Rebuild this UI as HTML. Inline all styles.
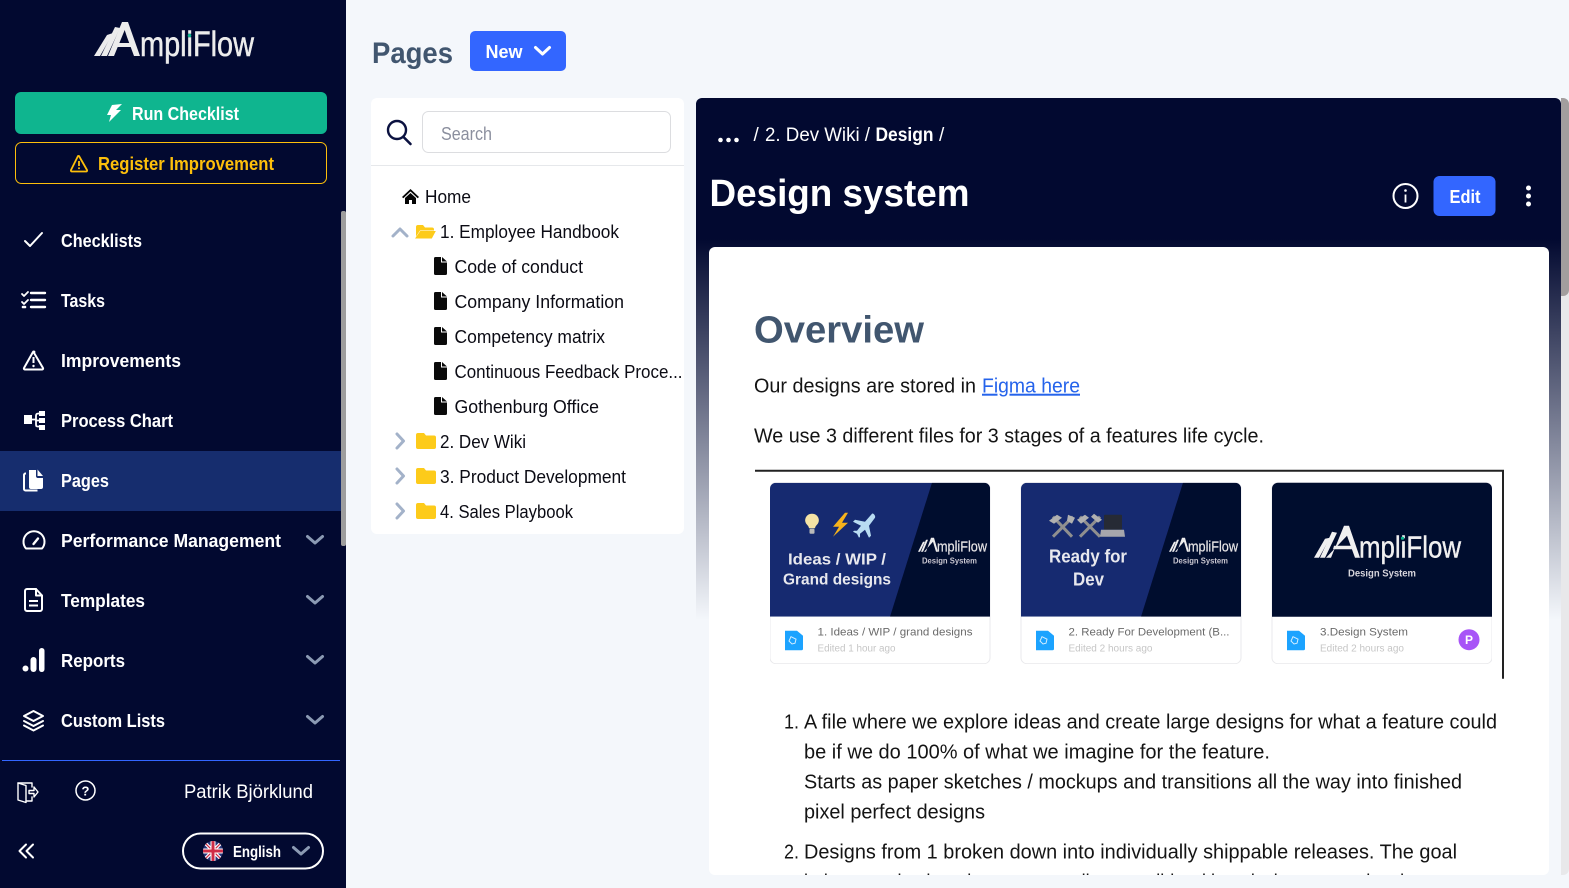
<!DOCTYPE html>
<html lang="en">
<head>
<meta charset="utf-8">
<title>AmpliFlow - Pages</title>
<style>
html,body{margin:0;padding:0;width:1569px;height:888px;overflow:hidden;background:#f4f7fb}
svg{display:block;position:absolute;left:0;top:0}
text{font-family:"Liberation Sans",Arial,sans-serif;white-space:pre}
.nav{font-size:18px;font-weight:700;fill:#fff}
.tree{font-size:18.5px;fill:#0b0b14}
.body{font-size:20px;fill:#141414}
.ct{font-size:11px;fill:#6a6a6a}
.ce{font-size:10px;fill:#c6c6c6}
.chev{fill:none;stroke:#8b9ab3;stroke-width:3;stroke-linecap:round;stroke-linejoin:round}
.ti{fill:none;stroke:#a3b2c9;stroke-width:3;stroke-linecap:round;stroke-linejoin:round}
.ic{fill:none;stroke:#fff;stroke-width:2;stroke-linecap:round;stroke-linejoin:round}
</style>
</head>
<body>
<svg width="1569" height="888" viewBox="0 0 1569 888" xmlns="http://www.w3.org/2000/svg">
<defs>
<linearGradient id="pg" x1="0" y1="98" x2="0" y2="620" gradientUnits="userSpaceOnUse">
<stop offset="0" stop-color="#020930"/><stop offset="0.27" stop-color="#020930"/><stop offset="1" stop-color="#f4f7fb"/>
</linearGradient>
<clipPath id="docclip"><rect x="708" y="247" width="840" height="627.300" rx="6"/></clipPath>
<clipPath id="flagclip"><circle cx="213" cy="851" r="10"/></clipPath>
<clipPath id="c1"><path d="M775 482h208a6 6 0 0 1 6 6v128h-220v-128a6 6 0 0 1 6-6z"/></clipPath>
<clipPath id="c2"><path d="M1026 482h208a6 6 0 0 1 6 6v128h-220v-128a6 6 0 0 1 6-6z"/></clipPath>
<filter id="soft" x="0" y="0" width="100%" height="100%"><feGaussianBlur stdDeviation="0.35"/></filter>
</defs>

<!-- page bg -->
<rect width="1569" height="888" fill="#f4f7fb"/>

<!-- SIDEBAR -->
<rect width="346" height="888" fill="#020930"/>
<rect x="341" y="211" width="5" height="335" rx="2" fill="#9d9d9d"/>
<rect y="451" width="341" height="60" fill="#162d6e"/>

<!-- logo -->
<g fill="#ececec">
<polygon points="94,56 100,56 113,33 107,35"/>
<polygon points="101,56 107,56 120,28 115,27"/>
<polygon points="108,56 114,56 128,22 122,22"/>
<polygon points="122,22 128,22 140,56 134,56 127,37"/>
<polygon points="115,43 132,43 133.500,47 114,47"/>
<text x="140" y="56" font-size="35" stroke="#ececec" stroke-width=".5" textLength="114" lengthAdjust="spacingAndGlyphs" fill="#ececec">mpliFlow</text>
</g>
<circle cx="189.500" cy="35.500" r="1.800" fill="#10b68f"/>

<!-- buttons -->
<rect x="15" y="92" width="312" height="42" rx="6" fill="#0fb58f"/>
<path d="M112 105L122 104 116 110 121 110 109 122 111 115 107 115z" fill="#fff"/>
<text x="132" y="120" font-size="18" font-weight="700" fill="#fff" textLength="107" lengthAdjust="spacingAndGlyphs">Run Checklist</text>
<rect x="15.500" y="142.500" width="311" height="41" rx="6" fill="none" stroke="#fdbf0b"/>
<path d="M79 156l8 14a1 1 0 0 1-1 1.500h-14a1 1 0 0 1-1-1.500l7-14a1 1 0 0 1 1 0z" fill="none" stroke="#fdbf0b" stroke-width="1.800" stroke-linejoin="round"/>
<path d="M79 161v5" stroke="#fdbf0b" stroke-width="1.800"/><circle cx="79" cy="168.300" r="1" fill="#fdbf0b"/>
<text x="98" y="170" font-size="18" font-weight="700" fill="#fdbf0b" textLength="176" lengthAdjust="spacingAndGlyphs">Register Improvement</text>

<!-- nav -->
<text class="nav" x="61" y="247" textLength="81" lengthAdjust="spacingAndGlyphs">Checklists</text>
<text class="nav" x="61" y="307" textLength="44" lengthAdjust="spacingAndGlyphs">Tasks</text>
<text class="nav" x="61" y="367" textLength="120" lengthAdjust="spacingAndGlyphs">Improvements</text>
<text class="nav" x="61" y="427" textLength="112" lengthAdjust="spacingAndGlyphs">Process Chart</text>
<text class="nav" x="61" y="487" textLength="48" lengthAdjust="spacingAndGlyphs">Pages</text>
<text class="nav" x="61" y="547" textLength="220" lengthAdjust="spacingAndGlyphs">Performance Management</text>
<text class="nav" x="61" y="607" textLength="84" lengthAdjust="spacingAndGlyphs">Templates</text>
<text class="nav" x="61" y="667" textLength="64" lengthAdjust="spacingAndGlyphs">Reports</text>
<text class="nav" x="61" y="727" textLength="104" lengthAdjust="spacingAndGlyphs">Custom Lists</text>

<!-- nav icons -->
<path d="M25 241l5 5 12-13" class="ic"/>
<g class="ic"><path d="M22 294l2 2 4-4M22 302l2 2 4-4" stroke-width="1.800"/><path d="M31 293h14M31 300h14M31 307h14" stroke-width="2.400"/><path d="M23 307h2" stroke-width="2.600"/></g>
<path d="M33.500 352l9.500 16a1 1 0 0 1-1 1.500h-17a1 1 0 0 1-1-1.500l9-16a.8.8 0 0 1 1.500 0z" class="ic"/>
<path d="M33.500 357v6" stroke="#fff" stroke-width="2"/><circle cx="33.500" cy="366" r="1.200" fill="#fff"/>
<g fill="#fff"><rect x="24" y="415" width="8" height="9"/><rect x="39" y="411" width="6" height="5"/><rect x="39" y="418" width="6" height="5"/><rect x="39" y="425" width="6" height="5"/></g>
<path d="M32 419.500h4M39 413.500c-3 0-3 1-3 3v7c0 3 0 3 3 3M36 420.500h3" fill="none" stroke="#fff" stroke-width="1.800"/>
<path d="M29 470h6l1 0v6c0 1 .5 2 2 2h5v9a2 2 0 0 1-2 2H31a2 2 0 0 1-2-2z" fill="#fff"/>
<path d="M37.500 469.500l5.500 6.500h-5.500z" fill="#fff"/>
<path d="M26 473.500h-.500a1.500 1.500 0 0 0-1.500 1.500v14a1.500 1.500 0 0 0 1.500 1.500h12" fill="none" stroke="#fff" stroke-width="2"/>
<path d="M26 548.500a10.500 10.500 0 1 1 16 0z" class="ic" stroke-width="1.700"/>
<path d="M33.500 544l4.500-5.500" stroke="#fff" stroke-width="2.400" stroke-linecap="round"/>
<path d="M27 589h9l6 6.500V609a2 2 0 0 1-2 2H27a2 2 0 0 1-2-2v-18a2 2 0 0 1 2-2z" class="ic"/>
<path d="M36 589v6.500h6" class="ic" stroke-width="1.600"/><path d="M29 601h9M29 605.500h9" stroke="#fff" stroke-width="2"/>
<g fill="#fff"><circle cx="25.500" cy="668.500" r="3"/><rect x="30.500" y="657" width="6" height="15" rx="3"/><rect x="39" y="648" width="5.500" height="24" rx="2.700"/></g>
<g class="ic" stroke-width="1.800"><path d="M33.500 711l9.500 5-9.500 5-9.500-5z"/><path d="M24 721l9.500 5 9.500-5M24 725.500l9.500 5 9.500-5"/></g>

<!-- nav chevrons -->
<path class="chev" d="M307.500 536.500l7.500 6.500 7.500-6.500"/>
<path class="chev" d="M307.500 596.500l7.500 6.500 7.500-6.500"/>
<path class="chev" d="M307.500 656.500l7.500 6.500 7.500-6.500"/>
<path class="chev" d="M307.500 716.500l7.500 6.500 7.500-6.500"/>

<!-- sidebar footer -->
<rect x="2" y="760" width="338" height="1" fill="#3366ff"/>
<g fill="none" stroke="#fff" stroke-width="1.400" stroke-linejoin="round" stroke-linecap="round">
<path d="M18 783h14v4M32 797v4H26"/><path d="M18 783l8 2.500v17l-8-2.500z"/><path d="M29 790.500h5v-3.500l4 5-4 5v-3.500h-5z"/>
</g>
<circle cx="85.500" cy="790.500" r="9.500" fill="none" stroke="#fff" stroke-width="1.500"/>
<text x="85.500" y="795.500" font-size="13" font-weight="700" fill="#fff" text-anchor="middle">?</text>
<text x="184" y="798" font-size="19" fill="#fff" textLength="129" lengthAdjust="spacingAndGlyphs">Patrik Björklund</text>
<path d="M26 844.500l-6.500 6.500 6.500 6.500M33 844.500l-6.500 6.500 6.500 6.500" fill="none" stroke="#fff" stroke-width="2" stroke-linecap="round" stroke-linejoin="round"/>
<rect x="183" y="833.500" width="140" height="35" rx="17.500" fill="none" stroke="#fff" stroke-width="2"/>
<g clip-path="url(#flagclip)">
<rect x="203" y="841" width="20" height="20" fill="#27357a"/>
<path d="M203 841l20 20M223 841l-20 20" stroke="#fff" stroke-width="3.500"/>
<path d="M203 841l20 20M223 841l-20 20" stroke="#cf2c46" stroke-width="1.200"/>
<path d="M213 841v20M203 851h20" stroke="#fff" stroke-width="5"/>
<path d="M213 841v20M203 851h20" stroke="#cf2c46" stroke-width="3"/>
</g>
<text x="233" y="857" font-size="16" font-weight="700" fill="#fff" textLength="48" lengthAdjust="spacingAndGlyphs">English</text>
<path class="chev" d="M293.500 847.500l7.500 6.500 7.500-6.500"/>

<!-- HEADER -->
<text x="372" y="63" font-size="30" font-weight="700" fill="#41566f" textLength="81" lengthAdjust="spacingAndGlyphs">Pages</text>
<rect x="470" y="31" width="96" height="40" rx="5" fill="#3366ff"/>
<text x="485.500" y="58" font-size="18" font-weight="700" fill="#fff" textLength="37" lengthAdjust="spacingAndGlyphs">New</text>
<path d="M535.500 47.500l7 6.500 7-6.500" fill="none" stroke="#fff" stroke-width="3" stroke-linecap="round" stroke-linejoin="round"/>

<!-- TREE PANEL -->
<rect x="371" y="98" width="313" height="436" rx="6" fill="#fff"/>
<circle cx="397" cy="130" r="9" fill="none" stroke="#0b1240" stroke-width="2.400"/>
<path d="M403.500 137l7 7" stroke="#0b1240" stroke-width="2.600" stroke-linecap="round"/>
<rect x="422.500" y="111.500" width="248" height="41" rx="6" fill="#fff" stroke="#dcdde0"/>
<text x="441" y="140" font-size="18" fill="#8b8f9e" textLength="51" lengthAdjust="spacingAndGlyphs">Search</text>
<rect x="371" y="165" width="313" height="1" fill="#e6e8eb"/>

<!-- tree icons -->
<path d="M402 197l8.500-8 8.500 8-1.300 1.300-7.200-6.800-7.200 6.800z" fill="#050505"/>
<path d="M405 198l5.500-5 5.500 5v6h-4v-4h-3v4h-4z" fill="#050505"/>
<path class="ti" d="M393 236l7-7 7 7"/>
<path d="M416 227a2 2 0 0 1 2-2h5l2 2.500h7a2 2 0 0 1 2 2v1h-14l-4 6z" fill="#fdcb1a"/>
<path d="M420.500 231.500h14.500l-3.500 6.500H416z" fill="#fdcb1a" stroke="#fdcb1a"/>
<g fill="#0a0a0a">
<path d="M434 258.500a1.500 1.500 0 0 1 1.500-1.500H441v5.500h6v11a1.500 1.500 0 0 1-1.500 1.500h-10a1.500 1.500 0 0 1-1.500-1.500z"/><path d="M442 257l5 4.500h-5z"/>
<path d="M434 293.500a1.500 1.500 0 0 1 1.500-1.500H441v5.500h6v11a1.500 1.500 0 0 1-1.500 1.500h-10a1.500 1.500 0 0 1-1.500-1.500z"/><path d="M442 292l5 4.500h-5z"/>
<path d="M434 328.500a1.500 1.500 0 0 1 1.500-1.500H441v5.500h6v11a1.500 1.500 0 0 1-1.500 1.500h-10a1.500 1.500 0 0 1-1.500-1.500z"/><path d="M442 327l5 4.500h-5z"/>
<path d="M434 363.500a1.500 1.500 0 0 1 1.500-1.500H441v5.500h6v11a1.500 1.500 0 0 1-1.500 1.500h-10a1.500 1.500 0 0 1-1.500-1.500z"/><path d="M442 362l5 4.500h-5z"/>
<path d="M434 398.500a1.500 1.500 0 0 1 1.500-1.500H441v5.500h6v11a1.500 1.500 0 0 1-1.500 1.500h-10a1.500 1.500 0 0 1-1.500-1.500z"/><path d="M442 397l5 4.500h-5z"/>
</g>
<path class="ti" d="M397 434l6.500 7-6.500 7"/>
<path class="ti" d="M397 469l6.500 7-6.500 7"/>
<path class="ti" d="M397 504l6.500 7-6.500 7"/>
<g fill="#fdcb1a">
<path d="M416 435a2 2 0 0 1 2-2h6l2 2.500h8a2 2 0 0 1 2 2V447a2 2 0 0 1-2 2h-16a2 2 0 0 1-2-2z"/>
<path d="M416 470a2 2 0 0 1 2-2h6l2 2.500h8a2 2 0 0 1 2 2V482a2 2 0 0 1-2 2h-16a2 2 0 0 1-2-2z"/>
<path d="M416 505a2 2 0 0 1 2-2h6l2 2.500h8a2 2 0 0 1 2 2V517a2 2 0 0 1-2 2h-16a2 2 0 0 1-2-2z"/>
</g>

<!-- tree text -->
<text class="tree" x="425" y="203" textLength="46" lengthAdjust="spacingAndGlyphs">Home</text>
<text class="tree" x="440" y="238" textLength="179" lengthAdjust="spacingAndGlyphs">1. Employee Handbook</text>
<text class="tree" x="454.500" y="273" textLength="128.500" lengthAdjust="spacingAndGlyphs">Code of conduct</text>
<text class="tree" x="454.500" y="308" textLength="169.500" lengthAdjust="spacingAndGlyphs">Company Information</text>
<text class="tree" x="454.500" y="343" textLength="150.500" lengthAdjust="spacingAndGlyphs">Competency matrix</text>
<text class="tree" x="454.500" y="378" textLength="228" lengthAdjust="spacingAndGlyphs">Continuous Feedback Proce...</text>
<text class="tree" x="454.500" y="413" textLength="144.500" lengthAdjust="spacingAndGlyphs">Gothenburg Office</text>
<text class="tree" x="440" y="448" textLength="86" lengthAdjust="spacingAndGlyphs">2. Dev Wiki</text>
<text class="tree" x="440" y="483" textLength="186" lengthAdjust="spacingAndGlyphs">3. Product Development</text>
<text class="tree" x="440" y="518" textLength="133" lengthAdjust="spacingAndGlyphs">4. Sales Playbook</text>

<!-- RIGHT PANEL -->
<path d="M702 98h853a6 6 0 0 1 6 6v771H696V104a6 6 0 0 1 6-6z" fill="url(#pg)"/>
<path d="M1561 98h2a6 6 0 0 1 6 6v765a6 6 0 0 1-6 6h-2z" fill="#e8e8ea"/>
<path d="M1561 98h2a6 6 0 0 1 6 6v186a6 6 0 0 1-6 6h-2z" fill="#a29e9e"/>

<circle cx="720.500" cy="140" r="2.300" fill="#fff"/><circle cx="728.500" cy="140" r="2.300" fill="#fff"/><circle cx="736.500" cy="140" r="2.300" fill="#fff"/>
<text x="753.500" y="141" font-size="19" fill="#fff">/</text>
<text x="765" y="141" font-size="19" fill="#fff" textLength="105" lengthAdjust="spacingAndGlyphs">2. Dev Wiki /</text>
<text x="875.500" y="141" font-size="19" font-weight="700" fill="#fff" textLength="58" lengthAdjust="spacingAndGlyphs">Design</text>
<text x="939" y="141" font-size="19" fill="#fff">/</text>
<text x="709.500" y="206" font-size="38" font-weight="700" fill="#fff" textLength="260" lengthAdjust="spacingAndGlyphs">Design system</text>
<circle cx="1405.500" cy="196" r="12" fill="none" stroke="#fff" stroke-width="2"/>
<circle cx="1405.500" cy="190.500" r="1.300" fill="#fff"/><path d="M1405.500 194.500v8" stroke="#fff" stroke-width="1.800"/>
<rect x="1433.500" y="176" width="62" height="40" rx="6" fill="#3366ff"/>
<text x="1449.500" y="203" font-size="18" font-weight="700" fill="#fff" textLength="31" lengthAdjust="spacingAndGlyphs">Edit</text>
<circle cx="1528.500" cy="188" r="2.500" fill="#fff"/><circle cx="1528.500" cy="196" r="2.500" fill="#fff"/><circle cx="1528.500" cy="204" r="2.500" fill="#fff"/>

<!-- DOC -->
<rect x="709" y="247" width="840" height="628" rx="6" fill="#fff"/>
<g transform="translate(1,0.7)">
<text x="753" y="342" font-size="38" font-weight="700" fill="#41566f" textLength="170" lengthAdjust="spacingAndGlyphs">Overview</text>
<text class="body" x="753" y="392" textLength="222" lengthAdjust="spacingAndGlyphs">Our designs are stored in</text>
<text class="body" x="981" y="392" style="fill:#2563eb" textLength="98" lengthAdjust="spacingAndGlyphs" text-decoration="underline">Figma here</text>
<text class="body" x="753" y="442" textLength="510" lengthAdjust="spacingAndGlyphs">We use 3 different files for 3 stages of a features life cycle.</text>

<!-- embedded image frame -->
<path d="M754 470h748v208" fill="none" stroke="#222" stroke-width="2"/>

<g filter="url(#soft)">
<!-- card 1 -->
<rect x="769" y="482" width="220" height="181" rx="6" fill="#fff" stroke="#e9e9ec"/>
<g clip-path="url(#c1)"><rect x="769" y="482" width="220" height="134" fill="#152c6f"/><polygon points="931,482 989,482 989,616 889,616" fill="#03082e"/></g>
<path d="M811 513a6.500 6.500 0 0 1 4.500 11.500c-1 1-1.300 2-1.500 3h-6c-.2-1-.5-2-1.500-3A6.500 6.500 0 0 1 811 513z" fill="#f5e3a5"/><rect x="808.500" y="528" width="5" height="5" rx="1" fill="#b9b9b9"/>
<path d="M844 512l-12 14h6l-6 10 15-14h-6l6-10z" fill="#f6b21a"/>
<path d="M871 513l-7 8-10-2-2 2 8 4-4 5h-3l-1 1 4 2 2 4 1-1v-3l5-4 4 8 2-2-2-10 6-8c1-2-2-5-3-4z" fill="#b9dcf2"/>
<text x="787" y="564" font-size="16" font-weight="700" fill="#e8e8ee" textLength="98" lengthAdjust="spacingAndGlyphs">Ideas / WIP /</text>
<text x="782" y="584" font-size="16" font-weight="700" fill="#e8e8ee" textLength="108" lengthAdjust="spacingAndGlyphs">Grand designs</text>
<polygon points="917,551 919,551 924,541 922,541" fill="#eee"/><polygon points="920,551 922,551 927,539 925,539" fill="#eee"/>
<polygon points="923,551 925,551 930,537 933,537 937,551 935,551 932,541" fill="#eee"/>
<text x="936" y="551" font-size="15" stroke="#e6e6e6" stroke-width=".2" fill="#e6e6e6" textLength="50" lengthAdjust="spacingAndGlyphs">mpliFlow</text>
<text x="921" y="563" font-size="8.500" font-weight="700" fill="#c8c8d0" textLength="55" lengthAdjust="spacingAndGlyphs">Design System</text>
<path d="M784 630h12l6 5v13a1.500 1.500 0 0 1-1.500 1.500h-16.500z" fill="#1aa3ff"/><path d="M790 636l5 2.500-1 4-3 .8-3-3z" fill="none" stroke="#d4edff" stroke-width="1"/>
<text class="ct" x="816.500" y="635" textLength="155" lengthAdjust="spacingAndGlyphs">1. Ideas / WIP / grand designs</text>
<text class="ce" x="816.500" y="651" textLength="78" lengthAdjust="spacingAndGlyphs">Edited 1 hour ago</text>

<!-- card 2 -->
<rect x="1020" y="482" width="220" height="181" rx="6" fill="#fff" stroke="#e9e9ec"/>
<g clip-path="url(#c2)"><rect x="1020" y="482" width="220" height="134" fill="#152c6f"/><polygon points="1182,482 1240,482 1240,616 1140,616" fill="#03082e"/></g>
<path d="M1052 516l19 20M1072 516l-20 20" stroke="#8f8f8f" stroke-width="3"/><path d="M1048 520l8-6 5 3-8 6zM1067 514l7 3-3 6-5-3z" fill="#b0b0b0"/>
<path d="M1079 516l20 20M1099 516l-20 20" stroke="#8f8f8f" stroke-width="3"/><path d="M1076 519l8-5 4 3-8 6zM1093 513l8 6-4 3-7-6z" fill="#b0b0b0"/>
<rect x="1103" y="514" width="18" height="15" rx="1" fill="#252a35"/><path d="M1100 529h23l1 7h-25z" fill="#a6a6ac"/>
<text x="1048" y="562" font-size="18" font-weight="700" fill="#e8e8ee" textLength="78" lengthAdjust="spacingAndGlyphs">Ready for</text>
<text x="1072" y="585" font-size="18" font-weight="700" fill="#e8e8ee" textLength="31" lengthAdjust="spacingAndGlyphs">Dev</text>
<polygon points="1168,551 1170,551 1175,541 1173,541" fill="#eee"/><polygon points="1171,551 1173,551 1178,539 1176,539" fill="#eee"/>
<polygon points="1174,551 1176,551 1181,537 1184,537 1188,551 1186,551 1183,541" fill="#eee"/>
<text x="1187" y="551" font-size="15" stroke="#e6e6e6" stroke-width=".2" fill="#e6e6e6" textLength="50" lengthAdjust="spacingAndGlyphs">mpliFlow</text>
<text x="1172" y="563" font-size="8.500" font-weight="700" fill="#c8c8d0" textLength="55" lengthAdjust="spacingAndGlyphs">Design System</text>
<path d="M1035 630h12l6 5v13a1.500 1.500 0 0 1-1.500 1.500H1035z" fill="#1aa3ff"/><path d="M1041 636l5 2.500-1 4-3 .8-3-3z" fill="none" stroke="#d4edff" stroke-width="1"/>
<text class="ct" x="1067.500" y="635" textLength="161" lengthAdjust="spacingAndGlyphs">2. Ready For Development (B...</text>
<text class="ce" x="1067.500" y="651" textLength="84" lengthAdjust="spacingAndGlyphs">Edited 2 hours ago</text>

<!-- card 3 -->
<rect x="1271" y="482" width="220" height="181" rx="6" fill="#fff" stroke="#e9e9ec"/>
<path d="M1277 482h208a6 6 0 0 1 6 6v128h-220v-128a6 6 0 0 1 6-6z" fill="#03082e"/>
<g fill="#f0f0f0">
<polygon points="1313,557 1318,557 1329,537 1324,538"/><polygon points="1319,557 1324,557 1336,532 1331,531"/>
<polygon points="1325,557 1330,557 1343,525 1348,525 1359,557 1354,557 1346,535"/>
<polygon points="1333,545 1350,545 1351,548.500 1332,548.500"/>
</g>
<text x="1358" y="557" font-size="31" stroke="#f0f0f0" stroke-width=".4" fill="#f0f0f0" textLength="102" lengthAdjust="spacingAndGlyphs">mpliFlow</text>
<circle cx="1401.500" cy="537.500" r="1.600" fill="#10b68f"/>
<text x="1347" y="576" font-size="10" font-weight="700" fill="#d6d6dc" textLength="68" lengthAdjust="spacingAndGlyphs">Design System</text>
<path d="M1286 630h12l6 5v13a1.500 1.500 0 0 1-1.500 1.500H1286z" fill="#1aa3ff"/><path d="M1292 636l5 2.500-1 4-3 .8-3-3z" fill="none" stroke="#d4edff" stroke-width="1"/>
<text class="ct" x="1319" y="635" textLength="88" lengthAdjust="spacingAndGlyphs">3.Design System</text>
<text class="ce" x="1319" y="651" textLength="84" lengthAdjust="spacingAndGlyphs">Edited 2 hours ago</text>
<circle cx="1468" cy="639" r="10.500" fill="#a855f7"/>
<text x="1468" y="643.500" font-size="12" font-weight="700" fill="#fff" text-anchor="middle">P</text>
</g>

<!-- list -->
<g clip-path="url(#docclip)">
<text class="body" x="783" y="728" textLength="15" lengthAdjust="spacingAndGlyphs">1.</text>
<text class="body" x="803" y="728" textLength="693" lengthAdjust="spacingAndGlyphs">A file where we explore ideas and create large designs for what a feature could</text>
<text class="body" x="803" y="758" textLength="466" lengthAdjust="spacingAndGlyphs">be if we do 100% of what we imagine for the feature.</text>
<text class="body" x="803" y="788" textLength="658" lengthAdjust="spacingAndGlyphs">Starts as paper sketches / mockups and transitions all the way into finished</text>
<text class="body" x="803" y="818" textLength="181" lengthAdjust="spacingAndGlyphs">pixel perfect designs</text>
<text class="body" x="783" y="858" textLength="15" lengthAdjust="spacingAndGlyphs">2.</text>
<text class="body" x="803" y="858" textLength="653" lengthAdjust="spacingAndGlyphs">Designs from 1 broken down into individually shippable releases. The goal</text>
<text class="body" x="803" y="888" textLength="620" lengthAdjust="spacingAndGlyphs">being to make the releases as small as possible without losing too much value</text>
</g>
</g>
</svg>
</body>
</html>
